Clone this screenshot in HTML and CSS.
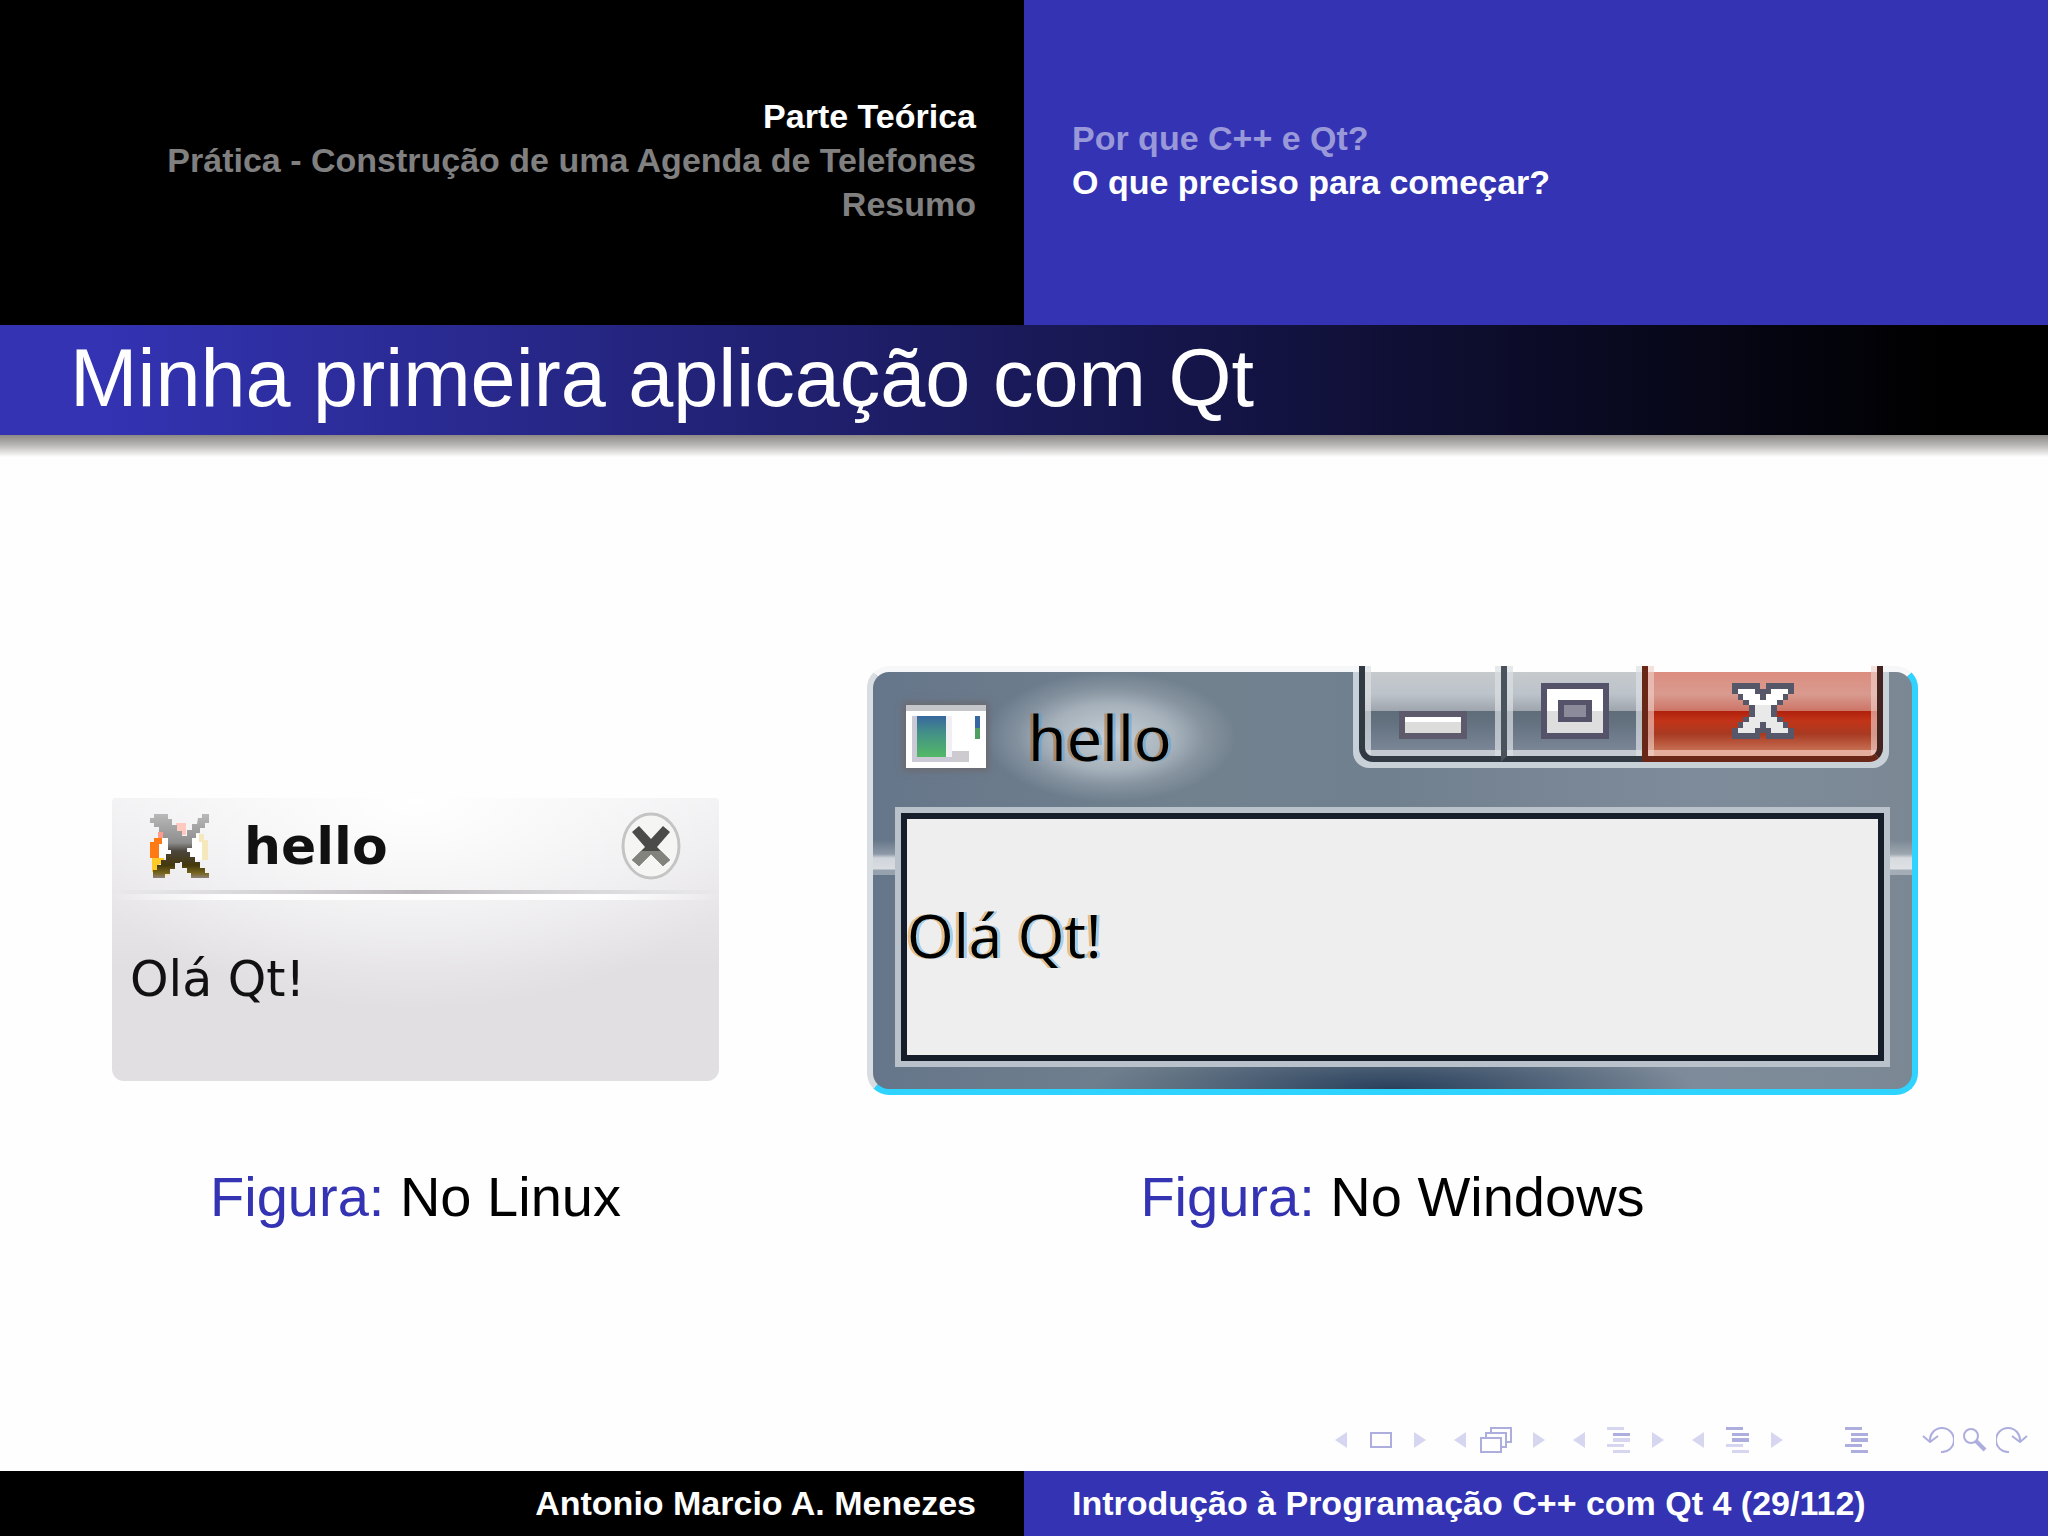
FILE: index.html
```html
<!DOCTYPE html>
<html lang="pt-BR">
  <head>
    <meta charset="UTF-8" />
    <meta name="viewport" content="width=device-width, initial-scale=1.0" />
    <title>Introdução à Programação C++ com Qt 4</title>
    <link rel="stylesheet" href="styles.css">
  </head>
  <body>
    <!-- Section / subsection header -->
    <header class="header">
      <nav class="sections">
        <a href="#teorica" class="active">Parte Teórica</a>
        <a href="#pratica">Prática - Construção de uma Agenda de Telefones</a>
        <a href="#resumo">Resumo</a>
      </nav>
      <nav class="subsections">
        <a href="#porque">Por que C++ e Qt?</a>
        <a href="#comecar" class="active">O que preciso para começar?</a>
      </nav>
    </header>

    <h1 class="frame-title">Minha primeira aplicação com Qt</h1>

    <main class="content">
      <div class="figures">
        <figure class="figure">
          <div class="linux-window">
            <div class="linux-titlebar">
              <svg class="linux-icon" viewBox="0 0 60 64">
                <defs>
                  <linearGradient id="blade" x1="0" y1="0" x2="0" y2="64" gradientUnits="userSpaceOnUse">
                    <stop offset="0" stop-color="#b8b8b8" />
                    <stop offset=".45" stop-color="#8d8d8d" />
                    <stop offset=".58" stop-color="#4b453c" />
                    <stop offset=".8" stop-color="#44380c" />
                    <stop offset=".92" stop-color="#75641c" />
                    <stop offset="1" stop-color="#8e8278" />
                  </linearGradient>
                </defs>
                <path fill="#fff" d="M8 24h16v20H8zM38 20h14v26H38z" />
                <path fill="#ff7a12" d="M4 24h8v6H9v14H0V28h4z" />
                <path fill="#ffc928" d="M2 44h12v6H9v8H2z" />
                <path fill="#ff9c8c" d="M8 18h7v6H8z" />
                <path fill="#ffc9bf" d="M26 9h10v12H26z" />
                <path fill="#f5e8bd" d="M49 20h5v6h4v20h-6V28h-3zM14 56h6v6h-6z" />
                <path fill="url(#blade)" d="M48 4h4V0h7v9h-4v5h-5v5h-4v5h-4v10h-5v8h-7v7h-5v6h-5v5h-5v5H3v-9h4v-5h4v-5h5v-6h5v-8h8V22h8v-6h5v-6h5z" />
                <path fill="url(#blade)" d="M4 0h14v5h4v6h5v6h5v5h8v10h-4v6h4v5h5v5h5v6h5v5h4v5H41v-5h-4v-5h-5v-6h-4v-6h-5v-6h-5V24h-5v-6H9v-5H4V9H0V4h4z" />
              </svg>
              <span class="linux-title">hello</span>
              <button class="linux-close" aria-label="Fechar">
                <svg viewBox="0 0 60 68">
                  <ellipse cx="30" cy="34" rx="28" ry="32" fill="#f5f5f3" stroke="#c4c4c5" stroke-width="3" />
                  <path d="M11 20L24 35L11 48L18 54L30 42L42 54L49 48L36 35L49 20L42 14L30 27L18 14Z" fill="#4b4b49" />
                  <path d="M11 48L20 39H40L49 48L42 54L30 42L18 54Z" fill="#83837e" />
                </svg>
              </button>
            </div>
            <div class="linux-body">Olá Qt!</div>
          </div>
          <figcaption class="caption"><span>Figura:</span> No Linux</figcaption>
        </figure>

        <figure class="figure">
          <div class="win-window">
            <div class="win-titlebar">
              <svg class="win-icon" viewBox="0 0 14 11" preserveAspectRatio="none" shape-rendering="crispEdges">
                <defs>
                  <linearGradient id="pane" x1="0" y1="0" x2="0" y2="1">
                    <stop offset="0" stop-color="#38689c" />
                    <stop offset=".4" stop-color="#438f88" />
                    <stop offset="1" stop-color="#52b866" />
                  </linearGradient>
                </defs>
                <path fill="#fff" d="M0 0h14v11H0z" />
                <path fill="#c5c6ca" d="M0 0h14v1H0z" />
                <path fill="#cbc9d5" d="M1 2h7v8H1z" />
                <path fill="#f1eff4" d="M7 2h1v7H7z" />
                <path fill="url(#pane)" d="M2 2h5v7H2z" />
                <path fill="#cdcbcf" d="M8 8h3v2H8z" />
                <path fill="#3568a0" d="M12 2h1v2h-1z" />
                <path fill="#4f9f62" d="M12 4h1v2h-1z" />
              </svg>
              <span class="win-title">hello</span>
              <div class="win-controls">
                <button class="win-button" aria-label="Minimizar">
                  <svg width="68" height="56" viewBox="0 0 12 10" shape-rendering="crispEdges">
                    <path fill="#5d5b6b" d="M0 5h12v5H0z" />
                    <path fill="#fff" d="M1 6h10v3H1z" />
                    <path fill="#dcdcdb" d="M1 7h10v2H1z" />
                  </svg>
                </button>
                <button class="win-button" aria-label="Maximizar">
                  <svg width="68" height="56" viewBox="0 0 12 10" shape-rendering="crispEdges">
                    <path fill="#55536a" d="M0 0h12v10H0z" />
                    <path fill="#fff" d="M1 1h10v4H1z" />
                    <path fill="#dedede" d="M1 5h10v4H1z" />
                    <path fill="#55536a" d="M3 3h6v4H3z" />
                    <path fill="#8b8b9c" d="M4 4h4v2H4z" />
                  </svg>
                </button>
                <button class="win-button win-close" aria-label="Fechar">
                  <svg width="62" height="56" viewBox="0 0 11 10" shape-rendering="crispEdges">
                    <path fill="#56586a" d="M0 0h5v1h1V0h5v2h-1v1H9v1H8v2h1v1h1v1h1v2H6V9H5v1H0V8h1V7h1V6h1V4H2V3H1V2H0z" />
                    <path fill="#fff" d="M1 1h3v1h1v1h1V2h1V1h3v1H9v1H8v1H3V3H2V2H1z" />
                    <path fill="#e9e9e9" d="M4 4h3v2h1v1h1v1h1v1H7V8H6V7H5v1H4v1H1V8h1V7h1V6h1z" />
                  </svg>
                </button>
              </div>
            </div>
            <div class="win-body">Olá Qt!</div>
          </div>
          <figcaption class="caption"><span>Figura:</span> No Windows</figcaption>
        </figure>
      </div>

      <!-- Slide navigation symbols -->
      <nav class="symbols">
        <div class="symbol-group">
          <button aria-label="Slide anterior"><svg width="12" height="26"><path class="light" d="M12 5v16L0 13z" /></svg></button>
          <button aria-label="Slide"><svg width="24" height="26"><path class="line" d="M2 6h20v14H2z" /></svg></button>
          <button aria-label="Próximo slide"><svg width="12" height="26"><path class="light" d="M0 5v16l12-8z" /></svg></button>
        </div>
        <div class="symbol-group">
          <button aria-label="Quadro anterior"><svg width="12" height="26"><path class="light" d="M12 5v16L0 13z" /></svg></button>
          <button class="symbol-stack" aria-label="Quadro"><svg width="32" height="26"><path class="line" d="M1 11h20v14H1zM6 11V6h20v14h-5M11 6V1h20v14h-5" /></svg></button>
          <button aria-label="Próximo quadro"><svg width="12" height="26"><path class="light" d="M0 5v16l12-8z" /></svg></button>
        </div>
        <div class="symbol-group">
          <button aria-label="Subseção anterior"><svg width="12" height="26"><path class="light" d="M12 5v16L0 13z" /></svg></button>
          <button aria-label="Subseção"><svg width="24" height="26"><path class="light" d="M0 0h17v3H0zM6 11h17v4H6zM0 17h17v3H0zM6 23h17v3H6z" /><path class="dark" d="M6 6h17v3H6z" /></svg></button>
          <button aria-label="Próxima subseção"><svg width="12" height="26"><path class="light" d="M0 5v16l12-8z" /></svg></button>
        </div>
        <div class="symbol-group">
          <button aria-label="Seção anterior"><svg width="12" height="26"><path class="light" d="M12 5v16L0 13z" /></svg></button>
          <button aria-label="Seção"><svg width="24" height="26"><path class="light" d="M0 17h17v3H0zM6 23h17v3H6z" /><path class="dark" d="M0 0h17v3H0zM6 6h17v3H6zM6 11h17v4H6z" /></svg></button>
          <button aria-label="Próxima seção"><svg width="12" height="26"><path class="light" d="M0 5v16l12-8z" /></svg></button>
        </div>
        <button class="symbol-doc" aria-label="Apresentação"><svg width="24" height="26"><path class="dark" d="M0 0h17v3H0zM6 6h17v3H6zM6 11h17v4H6zM0 17h17v3H0zM6 23h17v3H6z" /></svg></button>
        <div class="symbol-tools">
          <button aria-label="Voltar"><svg width="32" height="26"><path class="line" d="M19 25A12 12 0 1 0 8 14M1 9l7 6 8-6" /></svg></button>
          <button aria-label="Buscar"><svg width="24" height="26"><circle class="line" cx="8" cy="9" r="7" /><path class="line thick" d="M13 14l9 9" /></svg></button>
          <button aria-label="Avançar"><svg width="32" height="26"><path class="line" d="M13 25A12 12 0 1 1 24 14M16 9l8 6 7-6" /></svg></button>
        </div>
      </nav>
    </main>

    <footer class="footer">
      <div class="author">Antonio Marcio A. Menezes</div>
      <div class="talk">Introdução à Programação C++ com Qt 4 (29/112)</div>
    </footer>
  </body>
</html>
```
FILE: styles.css
```css
* {
  box-sizing: border-box;
}

body {
  display: flex;
  flex-direction: column;
  min-height: 100vh;
  margin: 0;
  font-family: "Liberation Sans", Arial, sans-serif;
  background: #fefefe;
  color: #000;
}

button {
  display: flex;
  padding: 0;
  border: none;
  background: none;
  cursor: pointer;
}

/* Header */
.header {
  display: grid;
  grid-template-columns: 1fr 1fr;
  font-size: 34px;
  font-weight: bold;
  line-height: 44px;
}

.header a {
  text-decoration: none;
}

.sections,
.subsections {
  display: flex;
  flex-direction: column;
  justify-content: center;
  min-height: 325px;
  padding: 0 48px 6px;
}

.sections {
  align-items: flex-end;
  background: #000;
}

.sections a {
  color: #808080;
}

.subsections {
  background: #3333b3;
}

.subsections a {
  color: #9999d9;
}

.header .active {
  color: #fff;
}

/* Frame title */
.frame-title {
  margin: 0;
  padding: 0 70px 4px;
  font-size: 81px;
  font-weight: normal;
  line-height: 106px;
  color: #fff;
  background: linear-gradient(to right, #3333b3 5%, #000 95%);
}

/* Slide content */
.content {
  display: flex;
  flex: 1;
  flex-direction: column;
  background: linear-gradient(to bottom, #8c8886, #b9b7b5 10px, #fefefe 22px);
}

.figures {
  display: grid;
  flex: 1;
  grid-template-columns: 607fr 1051fr;
  gap: 148px;
  padding: 231px 130px 0 112px;
}

.figure {
  display: flex;
  flex-direction: column;
  margin: 0;
}

.caption {
  margin-top: 70px;
  font-size: 56px;
  line-height: 64px;
  text-align: center;
}

.caption span {
  color: #3333b3;
}

/* Linux window */
.linux-window {
  margin: 132px 0 14px;
  border-radius: 4px 4px 12px 12px;
  background: radial-gradient(ellipse 60% 75% at 50% 0, #fff, transparent), linear-gradient(to bottom, #f1f0f2, #e1dfe2 60%);
  font-family: "DejaVu Sans", sans-serif;
}

.linux-titlebar {
  display: flex;
  align-items: center;
  height: 102px;
  padding: 0 38px;
  border-bottom: 6px solid;
  border-image: linear-gradient(to right, #fff0, #fff 20%, #fff 80%, #fff0) 1;
  background: linear-gradient(to right, #c4c2c500, #b9b7ba 50%, #c4c2c500) bottom / 100% 4px no-repeat;
}

.linux-icon {
  width: 60px;
  height: 64px;
}

.linux-title {
  flex: 1;
  margin-left: 34px;
  font-size: 52px;
  font-weight: bold;
  color: #111;
}

.linux-close svg {
  width: 60px;
  height: 68px;
}

.linux-body {
  height: 181px;
  padding: 48px 18px;
  font-size: 49px;
  line-height: 64px;
  color: #111;
}

/* Windows window */
.win-window {
  padding: 0 28px 28px;
  border: 6px solid;
  border-color: #f6f7f9 #2ed3ff #2ed3ff #d8dde2;
  border-radius: 22px;
  background:
    linear-gradient(to bottom, transparent 168px, #ffffff40 182px, #ffffffb0 186px, #ffffffc0 197px, #ffffff50 198px, #ffffff50 203px, transparent 203px),
    radial-gradient(ellipse 300px 50px at 50% 100%, #29405c, transparent),
    linear-gradient(to right, #66768a, #72818e 30%, #71808f 50%, #7e8b9a 80%, #7b8894);
  font-family: "Open Sans", sans-serif;
  font-size: 60px;
}

.win-titlebar {
  display: flex;
  align-items: flex-start;
  height: 141px;
}

.win-icon {
  width: 80px;
  height: 63px;
  margin: 33px 0 0 5px;
  box-shadow: 0 0 6px 3px #6b6b70;
}

.win-title {
  padding: 10px 64px 10px 42px;
  font-size: 63px;
  line-height: 110px;
  background: radial-gradient(ellipse closest-side, #c6cfd6, #b8c2cac0 50%, #9aa6b180 75%, transparent);
  text-shadow: -3px 0 #b0601080, 3px 0 #4aa0e080;
}

.win-controls {
  display: grid;
  grid-template-columns: 142px 141px 1fr;
  width: 536px;
  height: 102px;
  margin: -6px -5px 0 auto;
  padding: 0 6px 6px;
  border-radius: 0 0 16px 16px;
  background: linear-gradient(to bottom, transparent 6px, #c9d1d8 6px);
}

.win-button {
  align-items: flex-start;
  justify-content: center;
  padding: 17px 0 0;
  border-bottom: 6px solid #313a43;
  border-left: 6px solid #4a525b;
  background:
    linear-gradient(to right, #dde1e5b0 6px, transparent 6px calc(100% - 6px), #dde1e5b0 calc(100% - 6px)),
    linear-gradient(to top, #c3cad1 6px, transparent 6px),
    linear-gradient(to bottom, #fefefe 6px, #c6cacd 6px, #bcc3ca 28px, #9fa5ad 45px, #5f6d79 45px, #657382 60px, #808b9b);
}

.win-button:first-child {
  border-left-color: #313a43;
  border-bottom-left-radius: 14px;
}

.win-close {
  border-color: #6a2617;
  border-right: 6px solid #42231f;
  border-bottom-right-radius: 14px;
  background:
    linear-gradient(to right, #efd0c8a0 6px, transparent 6px calc(100% - 6px), #efd0c8a0 calc(100% - 6px)),
    linear-gradient(to top, #e5ae9c 6px, transparent 6px),
    linear-gradient(to bottom, #fefefe 6px, #dc8d80 6px, #d99a8f 28px, #cc7567 45px, #b0200c 45px, #c23418 55px, #a83a22 68px, #d08062);
}

.win-body {
  height: 248px;
  padding: 74px 0 0;
  border: 6px solid #161d2a;
  outline: 6px solid #b9c1ca;
  background: #efeeef;
  line-height: 84px;
  text-shadow: -3px 0 #e0902080, 3px 0 #50b0f080;
}

/* Navigation symbols */
.symbols {
  display: flex;
  flex-wrap: wrap;
  justify-content: flex-end;
  padding: 0 20px 18px;
}

.symbol-group {
  display: flex;
  justify-content: space-between;
  width: 91px;
  margin-right: 28px;
}

.symbol-stack {
  margin-right: 8px;
}

.symbol-doc {
  margin: 0 53px 0 34px;
}

.symbol-tools {
  display: flex;
  gap: 9px;
}

.light {
  fill: #d6d6f0;
}

.dark {
  fill: #adadde;
}

.line {
  fill: none;
  stroke: #adadde;
  stroke-width: 2;
}

.thick {
  stroke-width: 4;
}

/* Footer */
.footer {
  display: grid;
  grid-template-columns: 1fr 1fr;
  font-size: 34px;
  font-weight: bold;
  line-height: 65px;
  color: #fff;
}

.author {
  padding: 0 48px;
  text-align: right;
  background: #000;
}

.talk {
  padding: 0 48px;
  background: #3333b3;
}
```
